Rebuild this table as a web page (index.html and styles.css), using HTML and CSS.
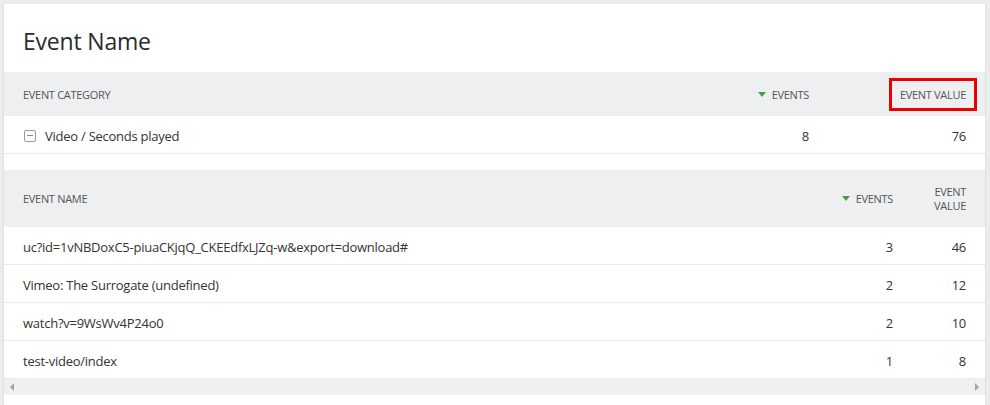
FILE: index.html
```html
<!DOCTYPE html>
<html>
<head>
<meta charset="utf-8">
<link rel="stylesheet" href="styles.css">
</head>
<body>
<div class="card">
  <div class="title-bar"><h1 class="title">Event Name</h1></div>

  <div class="grid grid-top">
    <div class="hcell">Event Category</div>
    <div class="hcell num"><span class="sort-arrow"></span>Events</div>
    <div class="hcell num val"><span class="highlight">Event Value</span></div>

    <div class="cell"><span class="collapse-icon"></span>Video / Seconds played</div>
    <div class="cell num">8</div>
    <div class="cell num val">76</div>
  </div>

  <div class="spacer"></div>

  <div class="grid grid-bottom">
    <div class="hcell tall">Event Name</div>
    <div class="hcell tall num"><span class="sort-arrow"></span>Events</div>
    <div class="hcell tall num val">Event Value</div>

    <div class="cell row">uc?id=1vNBDoxC5-piuaCKjqQ_CKEEdfxLJZq-w&amp;export=download#</div>
    <div class="cell row num">3</div>
    <div class="cell row num val">46</div>

    <div class="cell row">Vimeo: The Surrogate (undefined)</div>
    <div class="cell row num">2</div>
    <div class="cell row num val">12</div>

    <div class="cell row">watch?v=9WsWv4P24o0</div>
    <div class="cell row num">2</div>
    <div class="cell row num val">10</div>

    <div class="cell row">test-video/index</div>
    <div class="cell row num">1</div>
    <div class="cell row num val">8</div>
  </div>

  <div class="scrollbar">
    <span class="arrow arrow-left"></span>
    <span class="arrow arrow-right"></span>
  </div>
</div>
</body>
</html>
```

FILE: styles.css
```css
html, body {
  margin: 0;
  padding: 0;
}
body {
  background: #ececec;
  font-family: "Open Sans", "Noto Sans", sans-serif;
  color: #333;
  height: 405px;
  overflow: hidden;
}
.card {
  background: #fff;
  margin: 4px 4px 0 3px;
  height: 401px;
  border-left: 1px solid #e0e0e0;
  border-right: 1px solid #e0e0e0;
  box-sizing: border-box;
}
.title-bar {
  height: 68px;
  box-sizing: border-box;
  padding-top: 5px;
  display: flex;
  align-items: center;
  padding-left: 19px;
}
.title {
  margin: 0;
  font-size: 23px;
  font-weight: 400;
  color: #2b2b2b;
  letter-spacing: -0.2px;
}
.grid {
  display: grid;
}
.grid-top {
  grid-template-columns: 1fr 120px 176px;
}
.grid-bottom {
  grid-template-columns: 1fr 120px 92px;
}
.hcell {
  background: #eeeff1;
  height: 44px;
  display: flex;
  align-items: center;
  font-size: 11px;
  text-transform: uppercase;
  color: #555;
  letter-spacing: -0.3px;
  padding-left: 19px;
}
.hcell.tall {
  height: 57px;
  line-height: 14px;
}
.num {
  justify-content: flex-end;
  text-align: right;
  padding-left: 0;
  padding-right: 0;
}
.val {
  padding-right: 19px;
}
.hcell.val.tall {
  padding-left: 20px;
}
.cell {
  height: 37px;
  box-sizing: border-box;
  height: 38px;
  padding-top: 2px;
  border-bottom: 1px solid #ebebeb;
  display: flex;
  align-items: center;
  font-size: 13px;
  padding-left: 19px;
  letter-spacing: -0.25px;
  color: #333;
}
.cell.num {
  padding-left: 0;
}
.cell.val {
  padding-right: 19px;
}
.sort-arrow {
  width: 0;
  height: 0;
  border-left: 4px solid transparent;
  border-right: 4px solid transparent;
  border-top: 5px solid #4a9e48;
  margin-right: 6px;
}
.highlight {
  position: relative;
}
.highlight::after {
  content: "";
  position: absolute;
  left: -11px;
  right: -11px;
  top: -9px;
  bottom: -9px;
  border: 3px solid #ee0000;
}
.collapse-icon {
  width: 10px;
  height: 10px;
  border: 1px solid #999;
  border-radius: 2px;
  position: relative;
  margin-left: 1px;
  margin-right: 9px;
}
.collapse-icon::after {
  content: "";
  position: absolute;
  left: 2px;
  right: 2px;
  top: 4px;
  height: 1px;
  background: #888;
}
.spacer {
  height: 16px;
}
.scrollbar {
  height: 16px;
  background: #f0f0f0;
  display: flex;
  align-items: center;
  justify-content: space-between;
  padding: 0 6px;
}
.arrow {
  width: 0;
  height: 0;
  border-top: 4px solid transparent;
  border-bottom: 4px solid transparent;
}
.arrow-left {
  border-right: 4px solid #a3a3a3;
}
.arrow-right {
  border-left: 4px solid #a3a3a3;
}
```
